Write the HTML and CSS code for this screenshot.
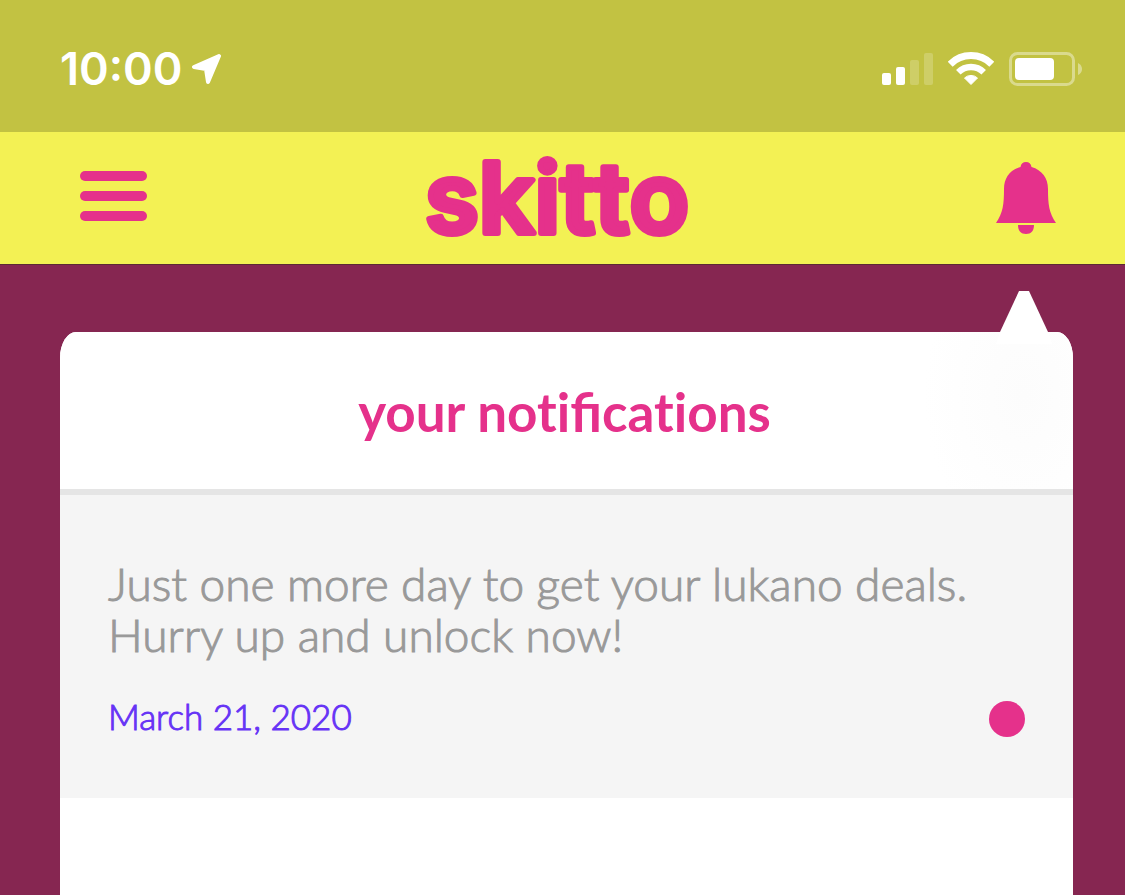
FILE: index.html
```html
<!DOCTYPE html>
<html lang="en">
<head>
  <meta charset="UTF-8">
  <meta name="viewport" content="width=device-width, initial-scale=1.0">
  <title>skitto - your notifications</title>
  <link rel="stylesheet" href="styles.css">
</head>
<body>
  <div class="status-bar">
    <div class="status-left">
      <span class="time">10:00</span>
      <svg class="location" width="31" height="31" viewBox="0 0 31 31" aria-hidden="true">
        <path d="M28 2 L3 13 L15 15 L17 28 Z" fill="#fff" stroke="#fff" stroke-width="4" stroke-linejoin="round"/>
      </svg>
    </div>
    <div class="status-right">
      <svg width="51" height="34" viewBox="0 0 51 34" fill="#fff" aria-hidden="true">
        <rect x="0" y="21" width="9" height="12" rx="2"/>
        <rect x="14" y="15" width="9" height="18" rx="2"/>
        <rect x="28" y="8" width="9" height="25" rx="2" opacity="0.2"/>
        <rect x="42" y="1" width="9" height="32" rx="2" opacity="0.2"/>
      </svg>
      <svg width="46" height="34" viewBox="0 0 46 34" fill="none" stroke="#fff" stroke-width="7" aria-hidden="true">
        <path d="M2.2 12.2 A29.5 29.5 0 0 1 43.8 12.2"/>
        <path d="M10.3 20.3 A18 18 0 0 1 35.7 20.3" stroke-width="6.4"/>
        <path d="M23 32.5 L16.5 26 A9.5 9.5 0 0 1 29.5 26 Z" fill="#fff" stroke-width="1" stroke-linejoin="round"/>
      </svg>
      <svg width="73" height="34" viewBox="0 0 73 34" aria-hidden="true">
        <rect x="1.5" y="1.5" width="63" height="31" rx="7" fill="none" stroke="#fff" stroke-width="3" opacity="0.4"/>
        <rect x="6" y="6" width="39" height="22" rx="4" fill="#fff"/>
        <path d="M69 11 Q73 13 73 17 Q73 21 69 23 Z" fill="#fff" opacity="0.4"/>
      </svg>
    </div>
  </div>

  <header class="header">
    <button class="menu-btn" type="button" aria-label="Menu">
      <span></span>
      <span></span>
      <span></span>
    </button>
    <a class="logo" href="#">
      <svg width="276" height="128" viewBox="0 0 276 128">
        <text x="138" y="99" text-anchor="middle">skitto</text>
      </svg>
    </a>
    <button class="bell-btn" type="button" aria-label="Notifications">
      <svg width="60" height="72" viewBox="0 0 60 72" fill="#e5318b" aria-hidden="true">
        <path d="M24.5 5 C25 1.5 27 0 30 0 C33 0 35 1.5 35.5 5 C46 8 52 16 52 27 C52 42 53 51 60 61 H0 C7 51 8 42 8 27 C8 16 14 8 24.5 5 Z"/>
        <path d="M22 63 H38 C38 69 35 72 30 72 C25 72 22 69 22 63 Z"/>
      </svg>
    </button>
  </header>

  <main class="content">
    <section class="card">
      <svg class="pointer" width="56" height="53" viewBox="0 0 56 53" aria-hidden="true">
        <path d="M23 0 H33 L52 41 L56 53 H0 L4 41 Z" fill="#fff"/>
      </svg>
      <h1>your not&zwnj;ificat&zwnj;ions</h1>
      <article class="notification">
        <p>Just one more day to get your lukano deals. Hurry up and unlock now!</p>
        <div class="meta">
          <time datetime="2020-03-21">March 21, 2020</time>
          <span class="unread"></span>
        </div>
      </article>
    </section>
  </main>
</body>
</html>
```
FILE: styles.css
```css
* {
  box-sizing: border-box;
}
body {
  margin: 0;
  min-height: 100vh;
  display: flex;
  flex-direction: column;
  font-family: Lato, 'Open Sans', sans-serif;
  background-color: #862651;
}
button {
  background: none;
  border: none;
  padding: 0;
  cursor: pointer;
}
svg {
  display: block;
}

/* Status bar */
.status-bar {
  display: flex;
  justify-content: space-between;
  align-items: center;
  height: 132px;
  padding: 6px 43px 0 60px;
  background-color: #c2c242;
}
.status-left {
  display: flex;
  align-items: center;
  gap: 9px;
}
.time {
  font-family: Inter, sans-serif;
  font-size: 45px;
  font-weight: 600;
  line-height: 48px;
  color: #fff;
}
.status-right {
  display: flex;
  align-items: center;
  gap: 15px;
}

/* Header */
.header {
  display: grid;
  grid-template-columns: 1fr auto 1fr;
  align-items: center;
  height: 133px;
  padding: 0 69px 0 58px;
  background-color: #f3f154;
  border-bottom: 1px solid #5c2a35;
}
.menu-btn {
  justify-self: start;
  display: flex;
  flex-direction: column;
  gap: 10px;
  padding: 0 22px 4px;
}
.menu-btn span {
  width: 67px;
  height: 10px;
  border-radius: 5px;
  background-color: #e5318b;
}
.logo text {
  font-family: Inter, sans-serif;
  font-size: 98px;
  font-weight: 600;
  font-kerning: none;
  fill: #e5318b;
  stroke: #e5318b;
  stroke-width: 6px;
  stroke-linejoin: round;
}
.bell-btn {
  justify-self: end;
}

/* Notifications */
.content {
  flex: 1;
  display: flex;
  padding: 67px 52px 0 60px;
}
.card {
  position: relative;
  flex: 1;
  border-radius: 16px 16px 0 0 / 26px 26px 0 0;
  background-color: #fff;
}
.pointer {
  position: absolute;
  top: -41px;
  right: 21px;
}
h1 {
  margin: 0;
  padding: 48px 24px 45px 20px;
  border-bottom: 6px solid #e5e5e5;
  border-radius: 16px 16px 0 0 / 26px 26px 0 0;
  background-image: radial-gradient(ellipse 100px 150px at 964px 63px, #fcfcfc, #fff);
  font-size: 53px;
  font-weight: 700;
  line-height: 64px;
  text-align: center;
  color: #e5318b;
}
.notification {
  padding: 63px 48px 55px;
  background-color: #f5f5f5;
}
.notification p {
  margin: 0 0 34px;
  font-size: 46px;
  font-weight: 300;
  line-height: 51px;
  color: #999;
  -webkit-text-stroke: 1px #999;
}
.meta {
  display: flex;
  justify-content: space-between;
  align-items: center;
}
time {
  font-size: 35px;
  font-weight: 300;
  line-height: 44px;
  padding-bottom: 5px;
  color: #6633f5;
  -webkit-text-stroke: 1px #6633f5;
}
.unread {
  width: 36px;
  height: 36px;
  border-radius: 50%;
  background-color: #e5318b;
}
```
